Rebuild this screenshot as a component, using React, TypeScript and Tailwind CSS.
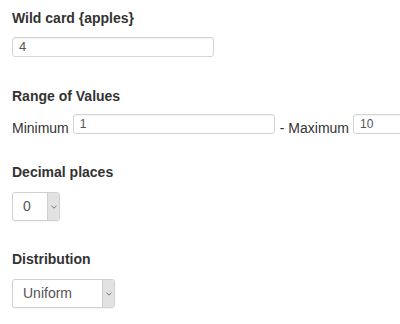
import React from "react";

const font = { fontFamily: '"Liberation Sans", Arial, sans-serif' };

function Chevron() {
  return (
    <svg width="6" height="4" viewBox="0 0 6 4" className="block">
      <path d="M0.5 0.8 L3 3.2 L5.5 0.8" fill="none" stroke="#777" strokeWidth="1" />
    </svg>
  );
}

function Select({ value, width }: { value: string; width: string }) {
  return (
    <div className={`flex h-[29px] ${width} overflow-hidden rounded-[3px] border border-[#d0d0d0] bg-white shadow-[0_1px_1px_rgba(0,0,0,0.04)]`}>
      <div className="flex flex-1 items-center pl-[10px] text-[14px] text-[#555]">{value}</div>
      <div className="flex w-[12px] items-center justify-center border-l border-[#cfcfcf] bg-[#e2e2e2]">
        <Chevron />
      </div>
    </div>
  );
}

export default function App() {
  return (
    <div className="h-[324px] w-[400px] overflow-hidden bg-white pl-[12px] pt-[8px] text-[#333]" style={font}>
      <div className="text-[14px] font-bold leading-[20px]">Wild card {"{apples}"}</div>
      <div className="mt-[9px] flex h-[20px] w-[202px] items-center rounded-[3px] border border-[#d4d4d4] pl-[6px] text-[13px] text-[#555] shadow-[inset_0_1px_1px_rgba(0,0,0,0.05)]">
        4
      </div>

      <div className="mt-[29px] text-[14px] font-bold leading-[20px]">Range of Values</div>
      <div className="mt-[8px] flex h-[20px] items-start whitespace-nowrap">
        <span className="mt-[4px] text-[14px] leading-[20px]">Minimum</span>
        <div className="ml-[4px] flex h-[20px] w-[202px] shrink-0 items-center rounded-[3px] border border-[#d4d4d4] pl-[6px] text-[12px] text-[#555] shadow-[inset_0_1px_1px_rgba(0,0,0,0.05)]">
          1
        </div>
        <span className="ml-[5px] mt-[4px] text-[14px] leading-[20px]">- Maximum</span>
        <div className="ml-[4px] flex h-[20px] w-[202px] shrink-0 items-center rounded-[3px] border border-[#d4d4d4] pl-[6px] text-[12px] text-[#555] shadow-[inset_0_1px_1px_rgba(0,0,0,0.05)]">
          10
        </div>
      </div>

      <div className="mt-[28px] text-[14px] font-bold leading-[20px]">Decimal places</div>
      <div className="mt-[10px]">
        <Select value="0" width="w-[48px]" />
      </div>

      <div className="mt-[28px] text-[14px] font-bold leading-[20px]">Distribution</div>
      <div className="mt-[10px]">
        <Select value="Uniform" width="w-[103px]" />
      </div>
    </div>
  );
}
